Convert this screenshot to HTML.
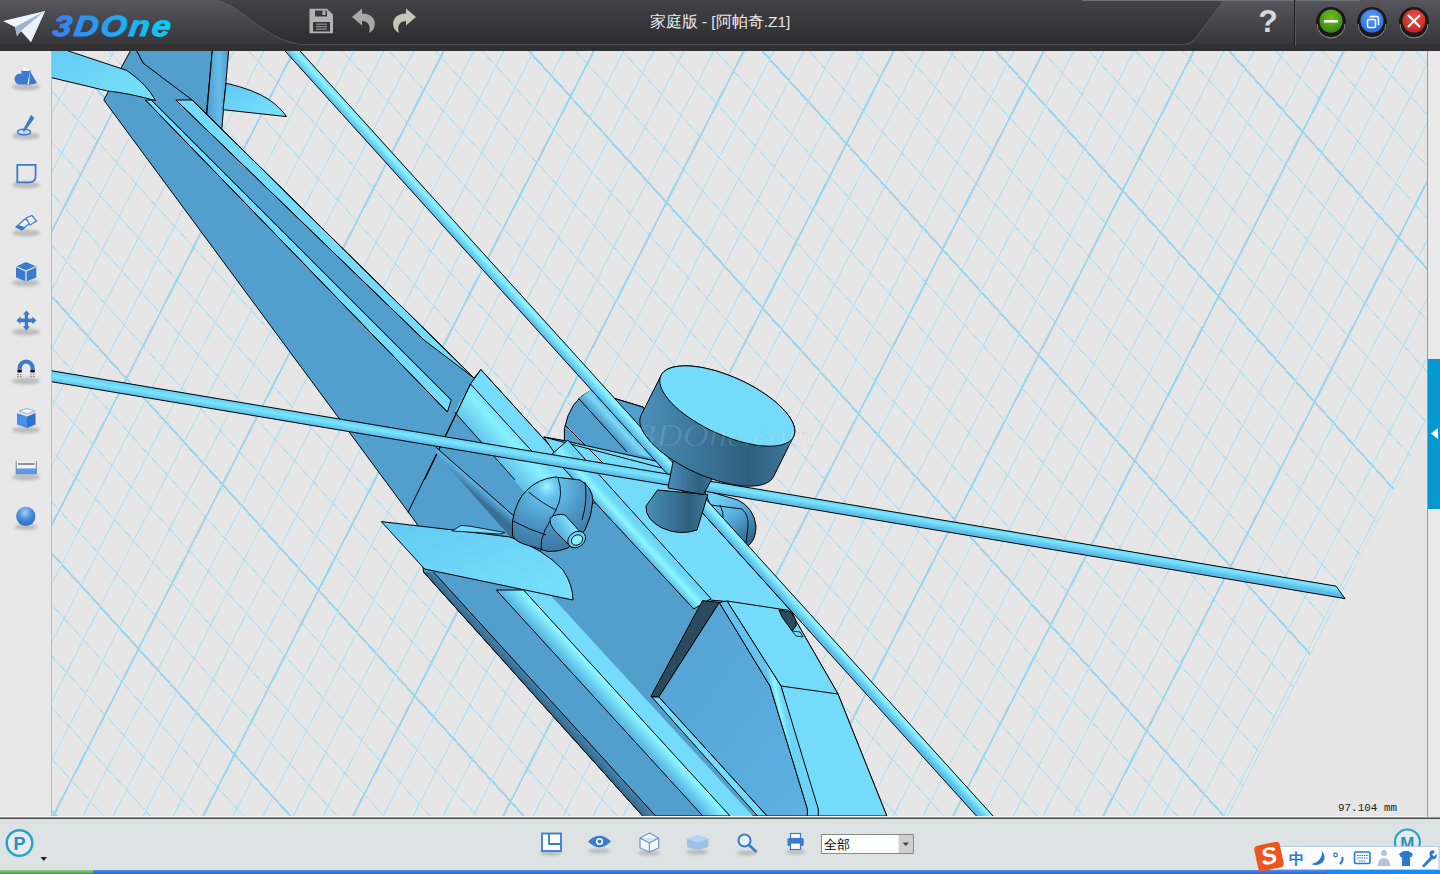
<!DOCTYPE html>
<html><head><meta charset="utf-8">
<style>
html,body{margin:0;padding:0;width:1440px;height:874px;overflow:hidden;background:#e8e8e8;font-family:"Liberation Sans",sans-serif;}
#title{position:absolute;left:0;top:0;width:1440px;height:51px;background:linear-gradient(#3c3b40,#2a2a2c);}
#ttl{position:absolute;left:0;width:1440px;top:10px;text-align:center;color:#e6e6e6;font-size:17px;}
#left{position:absolute;left:0;top:51px;width:51px;height:767px;background:#e8e8e8;}
#vp{position:absolute;left:0;top:0;}
#bottom{position:absolute;left:0;top:818px;width:1440px;height:52px;background:#dde2e2;border-top:1px solid #4a4a4a;}
#task{position:absolute;left:0;top:870px;width:1440px;height:4px;background:#2f6fd8;}
#task .g{position:absolute;left:0;top:0;width:93px;height:4px;background:#5aaa5a;}
#rstrip{position:absolute;left:1428px;top:51px;width:12px;height:767px;background:#eaeaea;border-left:1px solid #a8a8a8;}
#rtab{position:absolute;left:1428px;top:359px;width:12px;height:150px;background:#0898d0;}
#dist{position:absolute;left:1338px;top:799px;font-family:"Liberation Serif",serif;font-size:12px;color:#222;}
#dd{position:absolute;left:821px;top:834px;width:91px;height:19px;background:#fff;border:1px solid #888;font-size:12px;}
</style></head><body>
<svg id="vp" width="1440" height="874" viewBox="0 0 1440 874">
<defs>
<linearGradient id="gStab" x1="0" y1="0" x2="1" y2="1"><stop offset="0" stop-color="#62c8f2"/><stop offset="1" stop-color="#78e2fc"/></linearGradient>
<linearGradient id="gFin" x1="0" y1="0" x2="1" y2="0"><stop offset="0" stop-color="#4f98c8"/><stop offset="0.6" stop-color="#66bcea"/><stop offset="1" stop-color="#4f98c8"/></linearGradient>
<linearGradient id="gRail" x1="0" y1="0" x2="1" y2="0"><stop offset="0" stop-color="#5cc0ea"/><stop offset="0.5" stop-color="#80ecfc"/><stop offset="1" stop-color="#5cc0ea"/></linearGradient>
<linearGradient id="gBlade" x1="0" y1="0" x2="1" y2="0"><stop offset="0" stop-color="#5cc4ee"/><stop offset="0.5" stop-color="#86eefe"/><stop offset="1" stop-color="#60c8f0"/></linearGradient>
<linearGradient id="gBladeH" x1="0" y1="0" x2="0" y2="1"><stop offset="0" stop-color="#78e0fa"/><stop offset="1" stop-color="#6ad4f6"/></linearGradient>
<linearGradient id="gFront" x1="0" y1="0" x2="1" y2="1"><stop offset="0" stop-color="#56a2d4"/><stop offset="1" stop-color="#5cb0e2"/></linearGradient>
<linearGradient id="gNac" x1="0" y1="0" x2="1" y2="0"><stop offset="0" stop-color="#5cb8e6"/><stop offset="0.5" stop-color="#84ecfc"/><stop offset="1" stop-color="#5cb8e6"/></linearGradient>
<linearGradient id="gCyl" x1="0" y1="0" x2="1" y2="0"><stop offset="0" stop-color="#4a90ba"/><stop offset="0.7" stop-color="#2f5f7e"/><stop offset="1" stop-color="#40789c"/></linearGradient>
<linearGradient id="gRailU" x1="0" y1="0" x2="1" y2="-0.8"><stop offset="0" stop-color="#5cc0ea"/><stop offset="0.5" stop-color="#84eefc"/><stop offset="1" stop-color="#62c8f0"/></linearGradient>
<linearGradient id="gLedge" x1="0" y1="0" x2="1" y2="-0.8"><stop offset="0" stop-color="#70d8f8"/><stop offset="1" stop-color="#56a0d0"/></linearGradient>
<linearGradient id="gShade" x1="0" y1="0" x2="1" y2="-0.8"><stop offset="0" stop-color="#3a7098"/><stop offset="1" stop-color="#5aa8d8"/></linearGradient>
<linearGradient id="gNacU" gradientUnits="userSpaceOnUse" x1="454" y1="418" x2="490" y2="385"><stop offset="0" stop-color="#5cbce8"/><stop offset="0.55" stop-color="#88f0fe"/><stop offset="1" stop-color="#62c8f0"/></linearGradient>
<radialGradient id="gCap" gradientUnits="userSpaceOnUse" cx="547" cy="487" r="60"><stop offset="0" stop-color="#9af4fe"/><stop offset="0.18" stop-color="#66c4ee"/><stop offset="0.6" stop-color="#4d98c8"/><stop offset="1" stop-color="#3e7aa6"/></radialGradient>
<linearGradient id="gPipe" x1="0" y1="0" x2="1" y2="-0.6"><stop offset="0" stop-color="#5ab4e4"/><stop offset="0.5" stop-color="#90f2fe"/><stop offset="1" stop-color="#5ab4e4"/></linearGradient>
<linearGradient id="gBevel" gradientUnits="userSpaceOnUse" x1="530" y1="690" x2="540" y2="681"><stop offset="0" stop-color="#36698c"/><stop offset="1" stop-color="#4f94c2"/></linearGradient>
<linearGradient id="gRail1" gradientUnits="userSpaceOnUse" x1="600" y1="700" x2="619.7" y2="682"><stop offset="0" stop-color="#5ab8e6"/><stop offset="0.6" stop-color="#8cf8fe"/><stop offset="1" stop-color="#70dcf8"/></linearGradient>
<linearGradient id="gRail2" gradientUnits="userSpaceOnUse" x1="594.3" y1="501.7" x2="606" y2="491"><stop offset="0" stop-color="#5ab8e6"/><stop offset="0.55" stop-color="#8cf6fe"/><stop offset="1" stop-color="#6cd6f6"/></linearGradient>
<linearGradient id="gEdge" gradientUnits="userSpaceOnUse" x1="770" y1="690" x2="781" y2="688"><stop offset="0" stop-color="#62c4ee"/><stop offset="0.5" stop-color="#90f6fe"/><stop offset="1" stop-color="#6cd4f6"/></linearGradient>
<linearGradient id="gBladeD" gradientUnits="userSpaceOnUse" x1="285" y1="51" x2="296" y2="41"><stop offset="0" stop-color="#58bcea"/><stop offset="0.5" stop-color="#8ef4fe"/><stop offset="1" stop-color="#64ccf2"/></linearGradient>
<linearGradient id="gPodBand" gradientUnits="userSpaceOnUse" x1="598" y1="420" x2="612" y2="407"><stop offset="0" stop-color="#4c96c8"/><stop offset="0.55" stop-color="#7ad8f6"/><stop offset="1" stop-color="#58b4e4"/></linearGradient>
<linearGradient id="gBladeH2" gradientUnits="userSpaceOnUse" x1="52" y1="370.8" x2="50.2" y2="381.7"><stop offset="0" stop-color="#60c6f2"/><stop offset="0.5" stop-color="#7ae6fc"/><stop offset="1" stop-color="#5abbe9"/></linearGradient>
<linearGradient id="gPodR" gradientUnits="userSpaceOnUse" x1="712" y1="498" x2="752" y2="540"><stop offset="0" stop-color="#74d4f8"/><stop offset="0.45" stop-color="#5ab0e0"/><stop offset="1" stop-color="#2e6588"/></linearGradient>
<linearGradient id="gShade2" gradientUnits="userSpaceOnUse" x1="478" y1="498" x2="488" y2="486"><stop offset="0" stop-color="#386f96"/><stop offset="0.5" stop-color="#58a8d8"/><stop offset="1" stop-color="#6cc8f0"/></linearGradient>
<clipPath id="vpclip"><rect x="52" y="51" width="1375" height="765"/></clipPath>
<clipPath id="gridclip"><polygon points="52,51 1427,51 1427,424.6 1228.5,816 52,816"/></clipPath>
</defs>
<rect x="51" y="51" width="1377" height="767" fill="#e6e6e6"/>
<line x1="51.5" y1="51" x2="51.5" y2="818" stroke="#9cc4d8" stroke-width="1"/>
<g clip-path="url(#gridclip)" shape-rendering="crispEdges">
<line x1="-1571.7" y1="51" x2="-876.6" y2="816" stroke="#9dd6ee" stroke-width="2"/>
<line x1="-1525.0" y1="51" x2="-829.9" y2="816" stroke="#b2e0f2" stroke-width="1"/>
<line x1="-1478.3" y1="51" x2="-783.3" y2="816" stroke="#b2e0f2" stroke-width="1"/>
<line x1="-1431.7" y1="51" x2="-736.6" y2="816" stroke="#b2e0f2" stroke-width="1"/>
<line x1="-1385.0" y1="51" x2="-689.9" y2="816" stroke="#b2e0f2" stroke-width="1"/>
<line x1="-1338.3" y1="51" x2="-643.2" y2="816" stroke="#9dd6ee" stroke-width="2"/>
<line x1="-1291.6" y1="51" x2="-596.5" y2="816" stroke="#b2e0f2" stroke-width="1"/>
<line x1="-1244.9" y1="51" x2="-549.9" y2="816" stroke="#b2e0f2" stroke-width="1"/>
<line x1="-1198.3" y1="51" x2="-503.2" y2="816" stroke="#b2e0f2" stroke-width="1"/>
<line x1="-1151.6" y1="51" x2="-456.5" y2="816" stroke="#b2e0f2" stroke-width="1"/>
<line x1="-1104.9" y1="51" x2="-409.8" y2="816" stroke="#9dd6ee" stroke-width="2"/>
<line x1="-1058.2" y1="51" x2="-363.1" y2="816" stroke="#b2e0f2" stroke-width="1"/>
<line x1="-1011.5" y1="51" x2="-316.5" y2="816" stroke="#b2e0f2" stroke-width="1"/>
<line x1="-964.9" y1="51" x2="-269.8" y2="816" stroke="#b2e0f2" stroke-width="1"/>
<line x1="-918.2" y1="51" x2="-223.1" y2="816" stroke="#b2e0f2" stroke-width="1"/>
<line x1="-871.5" y1="51" x2="-176.4" y2="816" stroke="#9dd6ee" stroke-width="2"/>
<line x1="-824.8" y1="51" x2="-129.7" y2="816" stroke="#b2e0f2" stroke-width="1"/>
<line x1="-778.1" y1="51" x2="-83.1" y2="816" stroke="#b2e0f2" stroke-width="1"/>
<line x1="-731.5" y1="51" x2="-36.4" y2="816" stroke="#b2e0f2" stroke-width="1"/>
<line x1="-684.8" y1="51" x2="10.3" y2="816" stroke="#b2e0f2" stroke-width="1"/>
<line x1="-638.1" y1="51" x2="57.0" y2="816" stroke="#9dd6ee" stroke-width="2"/>
<line x1="-591.4" y1="51" x2="103.7" y2="816" stroke="#b2e0f2" stroke-width="1"/>
<line x1="-544.7" y1="51" x2="150.3" y2="816" stroke="#b2e0f2" stroke-width="1"/>
<line x1="-498.1" y1="51" x2="197.0" y2="816" stroke="#b2e0f2" stroke-width="1"/>
<line x1="-451.4" y1="51" x2="243.7" y2="816" stroke="#b2e0f2" stroke-width="1"/>
<line x1="-404.7" y1="51" x2="290.4" y2="816" stroke="#9dd6ee" stroke-width="2"/>
<line x1="-358.0" y1="51" x2="337.1" y2="816" stroke="#b2e0f2" stroke-width="1"/>
<line x1="-311.3" y1="51" x2="383.7" y2="816" stroke="#b2e0f2" stroke-width="1"/>
<line x1="-264.7" y1="51" x2="430.4" y2="816" stroke="#b2e0f2" stroke-width="1"/>
<line x1="-218.0" y1="51" x2="477.1" y2="816" stroke="#b2e0f2" stroke-width="1"/>
<line x1="-171.3" y1="51" x2="523.8" y2="816" stroke="#9dd6ee" stroke-width="2"/>
<line x1="-124.6" y1="51" x2="570.5" y2="816" stroke="#b2e0f2" stroke-width="1"/>
<line x1="-77.9" y1="51" x2="617.1" y2="816" stroke="#b2e0f2" stroke-width="1"/>
<line x1="-31.3" y1="51" x2="663.8" y2="816" stroke="#b2e0f2" stroke-width="1"/>
<line x1="15.4" y1="51" x2="710.5" y2="816" stroke="#b2e0f2" stroke-width="1"/>
<line x1="62.1" y1="51" x2="757.2" y2="816" stroke="#9dd6ee" stroke-width="2"/>
<line x1="108.8" y1="51" x2="803.9" y2="816" stroke="#b2e0f2" stroke-width="1"/>
<line x1="155.5" y1="51" x2="850.5" y2="816" stroke="#b2e0f2" stroke-width="1"/>
<line x1="202.1" y1="51" x2="897.2" y2="816" stroke="#b2e0f2" stroke-width="1"/>
<line x1="248.8" y1="51" x2="943.9" y2="816" stroke="#b2e0f2" stroke-width="1"/>
<line x1="295.5" y1="51" x2="990.6" y2="816" stroke="#9dd6ee" stroke-width="2"/>
<line x1="342.2" y1="51" x2="1037.3" y2="816" stroke="#b2e0f2" stroke-width="1"/>
<line x1="388.9" y1="51" x2="1083.9" y2="816" stroke="#b2e0f2" stroke-width="1"/>
<line x1="435.5" y1="51" x2="1130.6" y2="816" stroke="#b2e0f2" stroke-width="1"/>
<line x1="482.2" y1="51" x2="1177.3" y2="816" stroke="#b2e0f2" stroke-width="1"/>
<line x1="528.9" y1="51" x2="1224.0" y2="816" stroke="#9dd6ee" stroke-width="2"/>
<line x1="575.6" y1="51" x2="1270.7" y2="816" stroke="#b2e0f2" stroke-width="1"/>
<line x1="622.3" y1="51" x2="1317.3" y2="816" stroke="#b2e0f2" stroke-width="1"/>
<line x1="668.9" y1="51" x2="1364.0" y2="816" stroke="#b2e0f2" stroke-width="1"/>
<line x1="715.6" y1="51" x2="1410.7" y2="816" stroke="#b2e0f2" stroke-width="1"/>
<line x1="762.3" y1="51" x2="1457.4" y2="816" stroke="#9dd6ee" stroke-width="2"/>
<line x1="809.0" y1="51" x2="1504.1" y2="816" stroke="#b2e0f2" stroke-width="1"/>
<line x1="855.7" y1="51" x2="1550.7" y2="816" stroke="#b2e0f2" stroke-width="1"/>
<line x1="902.3" y1="51" x2="1597.4" y2="816" stroke="#b2e0f2" stroke-width="1"/>
<line x1="949.0" y1="51" x2="1644.1" y2="816" stroke="#b2e0f2" stroke-width="1"/>
<line x1="995.7" y1="51" x2="1690.8" y2="816" stroke="#9dd6ee" stroke-width="2"/>
<line x1="1042.4" y1="51" x2="1737.5" y2="816" stroke="#b2e0f2" stroke-width="1"/>
<line x1="1089.1" y1="51" x2="1784.1" y2="816" stroke="#b2e0f2" stroke-width="1"/>
<line x1="1135.7" y1="51" x2="1830.8" y2="816" stroke="#b2e0f2" stroke-width="1"/>
<line x1="1182.4" y1="51" x2="1877.5" y2="816" stroke="#b2e0f2" stroke-width="1"/>
<line x1="1229.1" y1="51" x2="1924.2" y2="816" stroke="#9dd6ee" stroke-width="2"/>
<line x1="1275.8" y1="51" x2="1970.9" y2="816" stroke="#b2e0f2" stroke-width="1"/>
<line x1="1322.5" y1="51" x2="2017.5" y2="816" stroke="#b2e0f2" stroke-width="1"/>
<line x1="1369.1" y1="51" x2="2064.2" y2="816" stroke="#b2e0f2" stroke-width="1"/>
<line x1="1415.8" y1="51" x2="2110.9" y2="816" stroke="#b2e0f2" stroke-width="1"/>
<line x1="1462.5" y1="51" x2="2157.6" y2="816" stroke="#9dd6ee" stroke-width="2"/>
<line x1="1509.2" y1="51" x2="2204.3" y2="816" stroke="#b2e0f2" stroke-width="1"/>
<line x1="1555.9" y1="51" x2="2250.9" y2="816" stroke="#b2e0f2" stroke-width="1"/>
<line x1="1602.5" y1="51" x2="2297.6" y2="816" stroke="#b2e0f2" stroke-width="1"/>
<line x1="1649.2" y1="51" x2="2344.3" y2="816" stroke="#b2e0f2" stroke-width="1"/>
<line x1="-456.2" y1="51" x2="-846.8" y2="816" stroke="#9dd6ee" stroke-width="2"/>
<line x1="-426.2" y1="51" x2="-816.8" y2="816" stroke="#b2e0f2" stroke-width="1"/>
<line x1="-396.2" y1="51" x2="-786.8" y2="816" stroke="#b2e0f2" stroke-width="1"/>
<line x1="-366.2" y1="51" x2="-756.8" y2="816" stroke="#b2e0f2" stroke-width="1"/>
<line x1="-336.2" y1="51" x2="-726.8" y2="816" stroke="#b2e0f2" stroke-width="1"/>
<line x1="-306.2" y1="51" x2="-696.8" y2="816" stroke="#9dd6ee" stroke-width="2"/>
<line x1="-276.2" y1="51" x2="-666.8" y2="816" stroke="#b2e0f2" stroke-width="1"/>
<line x1="-246.2" y1="51" x2="-636.8" y2="816" stroke="#b2e0f2" stroke-width="1"/>
<line x1="-216.2" y1="51" x2="-606.8" y2="816" stroke="#b2e0f2" stroke-width="1"/>
<line x1="-186.2" y1="51" x2="-576.8" y2="816" stroke="#b2e0f2" stroke-width="1"/>
<line x1="-156.2" y1="51" x2="-546.8" y2="816" stroke="#9dd6ee" stroke-width="2"/>
<line x1="-126.2" y1="51" x2="-516.8" y2="816" stroke="#b2e0f2" stroke-width="1"/>
<line x1="-96.2" y1="51" x2="-486.8" y2="816" stroke="#b2e0f2" stroke-width="1"/>
<line x1="-66.2" y1="51" x2="-456.8" y2="816" stroke="#b2e0f2" stroke-width="1"/>
<line x1="-36.2" y1="51" x2="-426.8" y2="816" stroke="#b2e0f2" stroke-width="1"/>
<line x1="-6.2" y1="51" x2="-396.8" y2="816" stroke="#9dd6ee" stroke-width="2"/>
<line x1="23.8" y1="51" x2="-366.8" y2="816" stroke="#b2e0f2" stroke-width="1"/>
<line x1="53.8" y1="51" x2="-336.8" y2="816" stroke="#b2e0f2" stroke-width="1"/>
<line x1="83.8" y1="51" x2="-306.8" y2="816" stroke="#b2e0f2" stroke-width="1"/>
<line x1="113.8" y1="51" x2="-276.8" y2="816" stroke="#b2e0f2" stroke-width="1"/>
<line x1="143.8" y1="51" x2="-246.8" y2="816" stroke="#9dd6ee" stroke-width="2"/>
<line x1="173.8" y1="51" x2="-216.8" y2="816" stroke="#b2e0f2" stroke-width="1"/>
<line x1="203.8" y1="51" x2="-186.8" y2="816" stroke="#b2e0f2" stroke-width="1"/>
<line x1="233.8" y1="51" x2="-156.8" y2="816" stroke="#b2e0f2" stroke-width="1"/>
<line x1="263.8" y1="51" x2="-126.8" y2="816" stroke="#b2e0f2" stroke-width="1"/>
<line x1="293.8" y1="51" x2="-96.8" y2="816" stroke="#9dd6ee" stroke-width="2"/>
<line x1="323.8" y1="51" x2="-66.8" y2="816" stroke="#b2e0f2" stroke-width="1"/>
<line x1="353.8" y1="51" x2="-36.8" y2="816" stroke="#b2e0f2" stroke-width="1"/>
<line x1="383.8" y1="51" x2="-6.8" y2="816" stroke="#b2e0f2" stroke-width="1"/>
<line x1="413.8" y1="51" x2="23.2" y2="816" stroke="#b2e0f2" stroke-width="1"/>
<line x1="443.8" y1="51" x2="53.2" y2="816" stroke="#9dd6ee" stroke-width="2"/>
<line x1="473.8" y1="51" x2="83.2" y2="816" stroke="#b2e0f2" stroke-width="1"/>
<line x1="503.8" y1="51" x2="113.2" y2="816" stroke="#b2e0f2" stroke-width="1"/>
<line x1="533.8" y1="51" x2="143.2" y2="816" stroke="#b2e0f2" stroke-width="1"/>
<line x1="563.8" y1="51" x2="173.2" y2="816" stroke="#b2e0f2" stroke-width="1"/>
<line x1="593.8" y1="51" x2="203.2" y2="816" stroke="#9dd6ee" stroke-width="2"/>
<line x1="623.8" y1="51" x2="233.2" y2="816" stroke="#b2e0f2" stroke-width="1"/>
<line x1="653.8" y1="51" x2="263.2" y2="816" stroke="#b2e0f2" stroke-width="1"/>
<line x1="683.8" y1="51" x2="293.2" y2="816" stroke="#b2e0f2" stroke-width="1"/>
<line x1="713.8" y1="51" x2="323.2" y2="816" stroke="#b2e0f2" stroke-width="1"/>
<line x1="743.8" y1="51" x2="353.2" y2="816" stroke="#9dd6ee" stroke-width="2"/>
<line x1="773.8" y1="51" x2="383.2" y2="816" stroke="#b2e0f2" stroke-width="1"/>
<line x1="803.8" y1="51" x2="413.2" y2="816" stroke="#b2e0f2" stroke-width="1"/>
<line x1="833.8" y1="51" x2="443.2" y2="816" stroke="#b2e0f2" stroke-width="1"/>
<line x1="863.8" y1="51" x2="473.2" y2="816" stroke="#b2e0f2" stroke-width="1"/>
<line x1="893.8" y1="51" x2="503.2" y2="816" stroke="#9dd6ee" stroke-width="2"/>
<line x1="923.8" y1="51" x2="533.2" y2="816" stroke="#b2e0f2" stroke-width="1"/>
<line x1="953.8" y1="51" x2="563.2" y2="816" stroke="#b2e0f2" stroke-width="1"/>
<line x1="983.8" y1="51" x2="593.2" y2="816" stroke="#b2e0f2" stroke-width="1"/>
<line x1="1013.8" y1="51" x2="623.2" y2="816" stroke="#b2e0f2" stroke-width="1"/>
<line x1="1043.8" y1="51" x2="653.2" y2="816" stroke="#9dd6ee" stroke-width="2"/>
<line x1="1073.8" y1="51" x2="683.2" y2="816" stroke="#b2e0f2" stroke-width="1"/>
<line x1="1103.8" y1="51" x2="713.2" y2="816" stroke="#b2e0f2" stroke-width="1"/>
<line x1="1133.8" y1="51" x2="743.2" y2="816" stroke="#b2e0f2" stroke-width="1"/>
<line x1="1163.8" y1="51" x2="773.2" y2="816" stroke="#b2e0f2" stroke-width="1"/>
<line x1="1193.8" y1="51" x2="803.2" y2="816" stroke="#9dd6ee" stroke-width="2"/>
<line x1="1223.8" y1="51" x2="833.2" y2="816" stroke="#b2e0f2" stroke-width="1"/>
<line x1="1253.8" y1="51" x2="863.2" y2="816" stroke="#b2e0f2" stroke-width="1"/>
<line x1="1283.8" y1="51" x2="893.2" y2="816" stroke="#b2e0f2" stroke-width="1"/>
<line x1="1313.8" y1="51" x2="923.2" y2="816" stroke="#b2e0f2" stroke-width="1"/>
<line x1="1343.8" y1="51" x2="953.2" y2="816" stroke="#9dd6ee" stroke-width="2"/>
<line x1="1373.8" y1="51" x2="983.2" y2="816" stroke="#b2e0f2" stroke-width="1"/>
<line x1="1403.8" y1="51" x2="1013.2" y2="816" stroke="#b2e0f2" stroke-width="1"/>
<line x1="1433.8" y1="51" x2="1043.2" y2="816" stroke="#b2e0f2" stroke-width="1"/>
<line x1="1463.8" y1="51" x2="1073.2" y2="816" stroke="#b2e0f2" stroke-width="1"/>
<line x1="1493.8" y1="51" x2="1103.2" y2="816" stroke="#9dd6ee" stroke-width="2"/>
<line x1="1523.8" y1="51" x2="1133.2" y2="816" stroke="#b2e0f2" stroke-width="1"/>
<line x1="1553.8" y1="51" x2="1163.2" y2="816" stroke="#b2e0f2" stroke-width="1"/>
<line x1="1583.8" y1="51" x2="1193.2" y2="816" stroke="#b2e0f2" stroke-width="1"/>
<line x1="1613.8" y1="51" x2="1223.2" y2="816" stroke="#b2e0f2" stroke-width="1"/>
<line x1="1643.8" y1="51" x2="1253.2" y2="816" stroke="#9dd6ee" stroke-width="2"/>
<line x1="1673.8" y1="51" x2="1283.2" y2="816" stroke="#b2e0f2" stroke-width="1"/>
<line x1="1703.8" y1="51" x2="1313.2" y2="816" stroke="#b2e0f2" stroke-width="1"/>
<line x1="1733.8" y1="51" x2="1343.2" y2="816" stroke="#b2e0f2" stroke-width="1"/>
<line x1="1763.8" y1="51" x2="1373.2" y2="816" stroke="#b2e0f2" stroke-width="1"/>
<line x1="1793.8" y1="51" x2="1403.2" y2="816" stroke="#9dd6ee" stroke-width="2"/>
<line x1="1823.8" y1="51" x2="1433.2" y2="816" stroke="#b2e0f2" stroke-width="1"/>
<line x1="1853.8" y1="51" x2="1463.2" y2="816" stroke="#b2e0f2" stroke-width="1"/>
<line x1="1883.8" y1="51" x2="1493.2" y2="816" stroke="#b2e0f2" stroke-width="1"/>
<line x1="1913.8" y1="51" x2="1523.2" y2="816" stroke="#b2e0f2" stroke-width="1"/>
<line x1="1943.8" y1="51" x2="1553.2" y2="816" stroke="#9dd6ee" stroke-width="2"/>
<line x1="1973.8" y1="51" x2="1583.2" y2="816" stroke="#b2e0f2" stroke-width="1"/>
<line x1="2003.8" y1="51" x2="1613.2" y2="816" stroke="#b2e0f2" stroke-width="1"/>
<line x1="2033.8" y1="51" x2="1643.2" y2="816" stroke="#b2e0f2" stroke-width="1"/>
<line x1="2063.8" y1="51" x2="1673.2" y2="816" stroke="#b2e0f2" stroke-width="1"/>
<line x1="2093.8" y1="51" x2="1703.2" y2="816" stroke="#9dd6ee" stroke-width="2"/>
<line x1="2123.8" y1="51" x2="1733.2" y2="816" stroke="#b2e0f2" stroke-width="1"/>
<line x1="2153.8" y1="51" x2="1763.2" y2="816" stroke="#b2e0f2" stroke-width="1"/>
<line x1="2183.8" y1="51" x2="1793.2" y2="816" stroke="#b2e0f2" stroke-width="1"/>
<line x1="2213.8" y1="51" x2="1823.2" y2="816" stroke="#b2e0f2" stroke-width="1"/>
<line x1="1618.2" y1="51" x2="1227.7" y2="816" stroke="#b2e0f2" stroke-width="1"/>
</g>
<g clip-path="url(#vpclip)">
<polygon points="133.5,45.0 212.8,45.0 205.4,123.5 143.1,63.1" fill="#529ecd" stroke="#000" stroke-width="1" stroke-linejoin="round" />
<polygon points="212.8,45.0 229.2,45.0 221.7,129.8 205.4,129.8" fill="url(#gFin)" stroke="#000" stroke-width="1" stroke-linejoin="round" />
<path d="M226.2,83.2 Q255,90 268.9,99.6 Q280,107 286.5,116.6 L223,109.7 Z" fill="url(#gStab)" stroke="#000" stroke-width="1" />
<polygon points="103.8,100.0 417.1,524.0 423.6,572.0 642.7,816.0 886.8,816.0 838.0,694.0 796.0,621.0 792.0,612.0 672.8,480.0 643.0,407.0 590.0,391.0 564.0,440.0 558.6,455.3 480.9,369.6 474.0,378.0 192.1,100.0 143.1,63.1 133.5,45.0" fill="#529ecd" stroke="#000" stroke-width="1" stroke-linejoin="round" />
<polygon points="145.4,100.0 151.2,100.0 451.2,400.0 447.4,412.0" fill="#74dcfa" stroke="#000" stroke-width="1" stroke-linejoin="round" />
<polygon points="175.9,100.0 192.1,100.0 474.0,378.0 424.0,340.0" fill="#74dcfa" stroke="#000" stroke-width="1" stroke-linejoin="round" />
<line x1="145.4" y1="100.0" x2="447.4" y2="412.0" stroke="#000" stroke-width="1"/>
<line x1="151.2" y1="100.0" x2="451.2" y2="400.0" stroke="#000" stroke-width="1"/>
<line x1="175.9" y1="100.0" x2="424.0" y2="340.0" stroke="#000" stroke-width="1"/>
<line x1="192.1" y1="100.0" x2="474.0" y2="378.0" stroke="#000" stroke-width="1"/>
<path d="M40,45 L52,45 L69,51.2 L126.7,70.4 Q147,84 155.5,100.6 Q128,93 107.5,91 L51.7,77.7 L40,75 Z" fill="url(#gStab)" stroke="#000" stroke-width="1" />
<polygon points="480.9,369.6 558.6,455.3 600.0,500.0 560.0,520.0 528.0,496.0 470.5,384.0" fill="#74dcfa" stroke="#000" stroke-width="1" stroke-linejoin="round" />
<polygon points="470.5,384.0 556.0,478.0 528.0,496.0 454.5,412.0" fill="url(#gNacU)" stroke="none" stroke-width="1" stroke-linejoin="round" />
<line x1="470.5" y1="384.0" x2="540.0" y2="460.0" stroke="#000" stroke-width="1"/>
<line x1="454.5" y1="412.0" x2="515.0" y2="480.0" stroke="#000" stroke-width="1"/>
<line x1="470.5" y1="384.0" x2="424.6" y2="480.0" stroke="#000" stroke-width="1"/>
<line x1="470.5" y1="384.0" x2="408.0" y2="512.4" stroke="#000" stroke-width="1"/>
<polygon points="436.0,447.3 515.0,517.0 513.0,540.0 436.0,453.0" fill="url(#gShade2)" stroke="none" stroke-width="1" stroke-linejoin="round" />
<line x1="436.0" y1="447.3" x2="515.0" y2="517.0" stroke="#000" stroke-width="1"/>
<polygon points="423.6,572.0 433.5,572.0 655.6,816.0 642.7,816.0" fill="url(#gBevel)" stroke="none" stroke-width="1" stroke-linejoin="round" />
<line x1="423.6" y1="572.0" x2="642.7" y2="816.0" stroke="#000" stroke-width="1"/>
<line x1="433.5" y1="572.0" x2="655.6" y2="816.0" stroke="#000" stroke-width="1"/>
<polygon points="523.5,590.0 545.8,590.0 753.0,816.0 730.0,816.0" fill="#74dcfa" stroke="none" stroke-width="1" stroke-linejoin="round" />
<polygon points="496.3,590.0 523.5,590.0 730.0,816.0 702.9,816.0" fill="url(#gRail1)" stroke="#000" stroke-width="1" stroke-linejoin="round" />
<polygon points="543.8,437.0 564.0,440.7 660.0,463.0 676.0,480.0 672.8,480.0 792.0,612.0 724.7,601.3 711.0,600.1 600.0,480.0 556.0,455.0" fill="#74dcfa" stroke="#000" stroke-width="1" stroke-linejoin="round" />
<path d="M564.4,441 L564.4,428.6 Q570,400 590,391 L643.3,407.2 L662,466 Z" fill="#529ecd" stroke="#000" stroke-width="1" />
<polygon points="578.7,398.5 591.0,389.8 591.4,390.0 652.9,458.0 627.1,452.1" fill="url(#gPodBand)" stroke="none" stroke-width="1" stroke-linejoin="round" />
<line x1="578.7" y1="398.5" x2="627.1" y2="452.1" stroke="#000" stroke-width="1"/>
<line x1="565.0" y1="425.0" x2="610.0" y2="470.0" stroke="#000" stroke-width="1"/>
<path d="M704,490 L738,500 Q754,508 756,526 Q756,540 748,546 L720,528 Z" fill="url(#gPodR)" stroke="#000" stroke-width="1" />
<path d="M711,505 L742,509 Q749,515 748,527 L746,543 M720,505 Q724,512 723,520" fill="none" stroke="#000" stroke-width="0.9" />
<polygon points="640.0,425.0 668.0,440.0 700.0,470.0 690.0,485.0 660.0,463.0" fill="#74dcfa" stroke="none" stroke-width="1" stroke-linejoin="round" />
<polygon points="543.8,437.0 564.0,440.7 660.0,462.0 662.0,468.0" fill="#74dcfa" stroke="#000" stroke-width="1" stroke-linejoin="round" />
<polygon points="551.0,455.0 567.8,440.0 711.0,598.7 693.8,609.0" fill="url(#gRail2)" stroke="#000" stroke-width="1" stroke-linejoin="round" />
<polygon points="702.5,600.6 719.3,602.5 658.8,697.0 651.0,696.3" fill="#2c4a5e" stroke="#000" stroke-width="1" stroke-linejoin="round" />
<polygon points="719.3,602.5 770.0,686.0 807.4,809.0 807.4,816.0 767.0,816.0 658.8,697.0" fill="url(#gFront)" stroke="#000" stroke-width="1" stroke-linejoin="round" />
<polygon points="651.8,697.0 658.8,697.0 767.0,816.0 757.6,816.0" fill="#74dcfa" stroke="#000" stroke-width="1" stroke-linejoin="round" />
<polygon points="727.0,601.0 788.8,610.4 796.0,621.0 838.0,694.0 886.8,816.0 818.3,816.0 781.0,686.0" fill="#74dcfa" stroke="#000" stroke-width="1" stroke-linejoin="round" />
<polygon points="719.3,602.5 727.0,601.0 781.0,686.0 818.3,809.0 818.3,816.0 807.4,816.0 807.4,809.0 770.0,686.0" fill="url(#gEdge)" stroke="#000" stroke-width="1" stroke-linejoin="round" />
<line x1="781.0" y1="686.0" x2="838.0" y2="694.0" stroke="#000" stroke-width="1"/>
<path d="M779,610 L790,612 Q797,618 796,626 L792,631 L782,617 Z" fill="#2c4a5e" stroke="#000" stroke-width="1" />
<polygon points="792.0,631.0 800.0,632.0 803.0,637.0 796.0,636.0" fill="#74dcfa" stroke="#000" stroke-width="0.8" stroke-linejoin="round" />
<path d="M381.3,521.6 L452.4,529.9 L510,537 Q545,550 563,570 Q573,585 573,600 L424.6,569 Z" fill="url(#gStab)" stroke="#000" stroke-width="1" />
<polygon points="452.0,531.0 461.0,525.5 470.0,526.2 505.0,532.5 500.0,534.0" fill="#74dcfa" stroke="#000" stroke-width="0.8" stroke-linejoin="round" />
<path d="M512.5,535 L512.5,521 Q516,500 527,490 Q538,479 555,477 L580,480 Q592,487 593,500 Q592,516 585,530 L568,548 Q558,552 548,551.5 L530,546 Q514,542 512.5,535 Z" fill="url(#gCap)" stroke="#000" stroke-width="1" />
<path d="M528.5,492 Q545,505 556,510 M558,478 Q564,495 556,510 L545,530 Q540,540 541,551 M585,482 Q588,500 582,520 M513,521 Q530,530 546,535" fill="none" stroke="#000" stroke-width="0.9" />
<path d="M550,518 Q556,513 565,515 L582,534 Q582,545 572,548 L554,530 Q549,524 550,518 Z" fill="url(#gPipe)" stroke="#000" stroke-width="0.9" />
<ellipse cx="576.7" cy="539.5" rx="9.5" ry="7.5" transform="rotate(-35 576.7 539.5)" fill="#6cd0f4" stroke="#000" stroke-width="0.9"/>
<ellipse cx="577" cy="540" rx="6" ry="4.8" transform="rotate(-35 577 540)" fill="#8af2fe" stroke="#000" stroke-width="0.9"/>
<polygon points="279.6,45.0 294.6,45.0 688.6,480.0 674.6,482.0" fill="url(#gBladeD)" stroke="#000" stroke-width="1" stroke-linejoin="round" />
<polygon points="40.0,368.8 680.0,476.1 680.0,487.1 40.0,379.8" fill="url(#gBladeH2)" stroke="#000" stroke-width="1" stroke-linejoin="round" />
<polygon points="700.0,479.5 1336.0,586.1 1345.0,598.6 700.0,490.5" fill="url(#gBladeH2)" stroke="#000" stroke-width="1" stroke-linejoin="round" />
<polygon points="672.8,480.0 688.6,480.0 1001.2,825.0 984.6,825.0" fill="url(#gBladeD)" stroke="#000" stroke-width="1" stroke-linejoin="round" />
<path d="M657.5,490 L707.9,494.6 L697,530 Q680,536 662,528 Q645,519 646,506 Z" fill="url(#gCyl)" stroke="#000" stroke-width="1" />
<polygon points="673.5,459.0 713.6,476.0 703.3,494.6 668.0,488.0" fill="url(#gCyl)" stroke="#000" stroke-width="1" stroke-linejoin="round" />
<polygon points="639.8,420.8 640.1,418.1 640.9,415.7 660.9,375.7 662.2,373.5 664.0,371.6 666.2,369.9 669.0,368.5 672.2,367.4 675.8,366.6 679.8,366.1 684.1,365.8 688.8,365.9 693.8,366.3 699.1,367.0 704.5,368.0 710.1,369.3 715.9,370.8 721.7,372.7 727.6,374.8 733.5,377.1 739.3,379.6 745.1,382.3 750.7,385.3 756.1,388.3 761.3,391.6 766.3,394.9 770.9,398.3 775.3,401.7 779.2,405.2 782.8,408.7 785.9,412.2 788.6,415.7 790.8,419.0 792.6,422.3 793.8,425.4 794.6,428.4 794.8,431.2 794.5,433.9 793.7,436.3 773.7,476.3 772.4,478.5 770.6,480.4 768.4,482.1 765.6,483.5 762.4,484.6 758.8,485.4 754.8,485.9 750.5,486.2 745.8,486.1 740.8,485.7 735.5,485.0 730.1,484.0 724.5,482.7 718.7,481.2 712.9,479.3 707.0,477.2 701.1,474.9 695.3,472.4 689.5,469.7 683.9,466.7 678.5,463.7 673.3,460.4 668.3,457.1 663.7,453.7 659.3,450.3 655.4,446.8 651.8,443.3 648.7,439.8 646.0,436.3 643.8,433.0 642.0,429.7 640.8,426.6 640.0,423.6" fill="url(#gCyl)" stroke="#000" stroke-width="1" stroke-linejoin="round" />
<polygon points="793.7,436.3 792.4,438.5 790.6,440.4 788.4,442.1 785.6,443.5 782.4,444.6 778.8,445.4 774.8,445.9 770.5,446.2 765.8,446.1 760.8,445.7 755.5,445.0 750.1,444.0 744.5,442.7 738.7,441.2 732.9,439.3 727.0,437.2 721.1,434.9 715.3,432.4 709.5,429.7 703.9,426.7 698.5,423.7 693.3,420.4 688.3,417.1 683.7,413.7 679.3,410.3 675.4,406.8 671.8,403.3 668.7,399.8 666.0,396.3 663.8,393.0 662.0,389.7 660.8,386.6 660.0,383.6 659.8,380.8 660.1,378.1 660.9,375.7 662.2,373.5 664.0,371.6 666.2,369.9 669.0,368.5 672.2,367.4 675.8,366.6 679.8,366.1 684.1,365.8 688.8,365.9 693.8,366.3 699.1,367.0 704.5,368.0 710.1,369.3 715.9,370.8 721.7,372.7 727.6,374.8 733.5,377.1 739.3,379.6 745.1,382.3 750.7,385.3 756.1,388.3 761.3,391.6 766.3,394.9 770.9,398.3 775.3,401.7 779.2,405.2 782.8,408.7 785.9,412.2 788.6,415.7 790.8,419.0 792.6,422.3 793.8,425.4 794.6,428.4 794.8,431.2 794.5,433.9 793.7,436.3" fill="#74dcfa" stroke="#000" stroke-width="1" stroke-linejoin="round" />
<text x="628" y="446" font-family="Liberation Serif" font-style="italic" font-size="31" textLength="185" lengthAdjust="spacingAndGlyphs" fill="#ffffff" fill-opacity="0.13" stroke="#000" stroke-opacity="0.06" stroke-width="1">i3DOne.com</text>
</g>
<defs><filter id="blur2" x="-50%" y="-100%" width="200%" height="300%"><feGaussianBlur stdDeviation="1.6"/></filter><radialGradient id="sph" cx="0.45" cy="0.3" r="0.7"><stop offset="0" stop-color="#a8d0f8"/><stop offset="0.5" stop-color="#4a8ee0"/><stop offset="1" stop-color="#2d6cc0"/></radialGradient></defs>
<rect x="0" y="51" width="51" height="767" fill="#e8e8e8"/>
<ellipse cx="26" cy="87" rx="14" ry="3.5" fill="#9a9a9a" opacity="0.55" filter="url(#blur2)"/>
<circle cx="20" cy="79" r="5.5" fill="#3a7bd0"/>
<rect x="21.5" y="69.5" width="9" height="15" fill="#3a7bd0"/><ellipse cx="26" cy="69.5" rx="4.5" ry="1.6" fill="#f4f4f4"/>
<path d="M30,71 L37,83 Q33,85 27.5,84 Z" fill="#3a7bd0"/><path d="M30,71 L27.5,84 L29,84 Z" fill="#f4f4f4"/>
<ellipse cx="26" cy="136" rx="14" ry="3.5" fill="#9a9a9a" opacity="0.55" filter="url(#blur2)"/>
<ellipse cx="24" cy="132" rx="6.5" ry="2.8" fill="none" stroke="#3a7bd0" stroke-width="1.4"/>
<path d="M31,115 L34.5,118 L25,131 L23,132 L23.5,129 Z" fill="#3a7bd0"/>
<ellipse cx="26" cy="185" rx="14" ry="3.5" fill="#9a9a9a" opacity="0.55" filter="url(#blur2)"/>
<path d="M17.3,164.8 H35.6 V176 Q35.6,182.4 29,182.4 H17.3 Z" fill="none" stroke="#3a7bd0" stroke-width="1.8"/>
<ellipse cx="26" cy="233" rx="14" ry="3.5" fill="#9a9a9a" opacity="0.55" filter="url(#blur2)"/>
<path d="M16,227 L25,219 L31,222 L22,230 Z" fill="#f0f4fa" stroke="#3a7bd0" stroke-width="1.2"/>
<path d="M26,218 L32,215.5 L36.5,221 L30,225 Z" fill="#f0f4fa" stroke="#3a7bd0" stroke-width="1.2"/>
<path d="M16,227 L22,230 L25,227 L18,225 Z" fill="#3a7bd0"/>
<ellipse cx="26" cy="283" rx="14" ry="3.5" fill="#9a9a9a" opacity="0.55" filter="url(#blur2)"/>
<path d="M26,262 L36.3,266.5 V277.5 L26,281.4 L16,277.5 V266.5 Z" fill="#3a7bd0"/>
<path d="M16,266.5 L26,271 L36.3,266.5 M26,271 V281.4" fill="none" stroke="#e8e8e8" stroke-width="1.2"/>
<ellipse cx="26" cy="332" rx="14" ry="3.5" fill="#9a9a9a" opacity="0.55" filter="url(#blur2)"/>
<path d="M26.4,310.4 L30,314.5 H28 V318.5 H32.3 V316.5 L36.4,320.4 L32.3,324.3 V322.3 H28 V326.3 H30 L26.4,330.4 L22.8,326.3 H24.8 V322.3 H20.5 V324.3 L16.4,320.4 L20.5,316.5 V318.5 H24.8 V314.5 H22.8 Z" fill="#3a7bd0"/>
<ellipse cx="26" cy="381" rx="14" ry="3.5" fill="#9a9a9a" opacity="0.55" filter="url(#blur2)"/>
<path d="M17.5,372 V368 A8.6,8.6 0 0 1 34.7,368 V372 H30.5 V368 A4.4,4.4 0 0 0 21.7,368 V372 Z" fill="#3a7bd0"/>
<rect x="17.5" y="370" width="4.2" height="2.5" fill="#111"/><rect x="30.5" y="370" width="4.2" height="2.5" fill="#111"/>
<path d="M18,374 V378 M20.8,374 V378 M31,374 V378 M33.8,374 V378" stroke="#555" stroke-width="1" stroke-dasharray="1.2,0.8"/>
<ellipse cx="26" cy="430" rx="14" ry="3.5" fill="#9a9a9a" opacity="0.55" filter="url(#blur2)"/>
<path d="M17,413 L27,416.5 V428 L17,424.5 Z" fill="#4a90e8"/><path d="M27,416.5 L35.5,413 V424.5 L27,428 Z" fill="#3270c8"/>
<path d="M19,411 L27,408.5 L35,411 L27,414 Z" fill="#f4f8fc" stroke="#7aa6d8" stroke-width="0.8"/>
<ellipse cx="26" cy="477" rx="14" ry="3.5" fill="#9a9a9a" opacity="0.55" filter="url(#blur2)"/>
<rect x="16" y="461.5" width="20.5" height="7" fill="#f2f2f2"/>
<rect x="16" y="468.5" width="20.5" height="5.8" fill="#5a98e8"/>
<path d="M16.2,461 V474 M36.3,461 V474" stroke="#6a8ab0" stroke-width="1"/>
<path d="M18,464 H34.5" stroke="#333" stroke-width="1"/>
<ellipse cx="26" cy="527" rx="12" ry="3" fill="#9a9a9a" opacity="0.55" filter="url(#blur2)"/>
<circle cx="25.8" cy="516.4" r="9.6" fill="url(#sph)"/>
<defs><linearGradient id="taskG" x1="0" y1="0" x2="0" y2="1"><stop offset="0" stop-color="#4a8ef0"/><stop offset="1" stop-color="#2a62c8"/></linearGradient><linearGradient id="taskGr" x1="0" y1="0" x2="0" y2="1"><stop offset="0" stop-color="#8fcf8f"/><stop offset="1" stop-color="#3e9a3e"/></linearGradient></defs>
<rect x="0" y="816" width="1440" height="1.5" fill="#f2f2f2"/>
<rect x="0" y="817.5" width="1440" height="1.5" fill="#4a4a4a"/>
<rect x="0" y="819" width="1440" height="51" fill="#dde2e2"/>
<rect x="0" y="870" width="1440" height="4" fill="url(#taskG)"/>
<rect x="0" y="870" width="93" height="4" fill="url(#taskGr)"/>
<rect x="1327" y="870" width="113" height="4" fill="#1a8ef0"/>
<circle cx="19.5" cy="843" r="12.8" fill="#e4ecee" stroke="#2aa0c8" stroke-width="2.4"/>
<text x="19.5" y="850" text-anchor="middle" font-family="Liberation Sans" font-weight="bold" font-size="18" fill="#2a90b8">P</text>
<path d="M40.5,857 H47 L43.75,861 Z" fill="#222"/>
<ellipse cx="551" cy="853" rx="11" ry="2.5" fill="#9a9a9a" opacity="0.55" filter="url(#blur2)"/>
<rect x="542" y="833.5" width="19" height="17.5" fill="#fff" stroke="#3a7bd0" stroke-width="1.8"/>
<path d="M549,833.5 V844 H561" fill="none" stroke="#3a7bd0" stroke-width="1.8"/>
<ellipse cx="599" cy="851" rx="11" ry="2.5" fill="#9a9a9a" opacity="0.55" filter="url(#blur2)"/>
<path d="M588,841.5 Q599.5,830 611,841.5 Q599.5,853 588,841.5 Z" fill="#3a7bd0"/><circle cx="599.5" cy="841.5" r="3.6" fill="#fff"/><circle cx="599.5" cy="841.5" r="2" fill="#3a7bd0"/>
<ellipse cx="649" cy="853" rx="11" ry="2.5" fill="#9a9a9a" opacity="0.55" filter="url(#blur2)"/>
<path d="M649.3,833 L658.7,838 V848 L649.3,852 L640,848 V838 Z M640,838 L649.3,843 L658.7,838 M649.3,843 V852" fill="#f4f8fc" stroke="#5a90d8" stroke-width="1.1"/>
<ellipse cx="697" cy="852" rx="11" ry="2.5" fill="#9a9a9a" opacity="0.55" filter="url(#blur2)"/>
<path d="M687,839 L698,835 L708.3,839 V847 L698,850 L687,847 Z" fill="#9cc0e8"/><path d="M687,839 L698,842.5 L708.3,839 L698,835 Z" fill="#b8d4f2"/>
<ellipse cx="747" cy="853" rx="10" ry="2.5" fill="#9a9a9a" opacity="0.55" filter="url(#blur2)"/>
<circle cx="744.5" cy="840.5" r="6" fill="#e8f0fa" stroke="#3a7bd0" stroke-width="2"/><path d="M749,845 L756.5,852" stroke="#3a7bd0" stroke-width="2.6"/>
<ellipse cx="796" cy="852" rx="10" ry="2.5" fill="#9a9a9a" opacity="0.55" filter="url(#blur2)"/>
<rect x="790.5" y="833.5" width="10" height="5" fill="#fff" stroke="#3a7bd0" stroke-width="1.2"/><rect x="787.5" y="838" width="16.2" height="8" rx="1.5" fill="#3a7bd0"/><rect x="790.5" y="843" width="10" height="6.5" fill="#fff" stroke="#3a7bd0" stroke-width="1.2"/>
<rect x="821.5" y="834.5" width="92" height="19" fill="#fff" stroke="#8a8a8a" stroke-width="1"/>
<rect x="898.5" y="835" width="14.5" height="18" fill="#cfcfcf"/>
<path d="M902.5,842.5 H909 L905.75,846 Z" fill="#444"/>
<text x="823.5" y="848.5" font-family="Liberation Sans" font-size="13" fill="#000">全部</text>
<circle cx="1407.4" cy="842" r="12.5" fill="#e2eaec" stroke="#2aa0c8" stroke-width="2.2"/>
<text x="1407.4" y="849" text-anchor="middle" font-family="Liberation Sans" font-weight="bold" font-size="17" fill="#2a90b8">M</text>
<rect x="1278" y="846.5" width="161" height="23" fill="#fafcff" stroke="#b8cce0" stroke-width="1"/>
<g transform="rotate(-12 1269 856.5)"><rect x="1256" y="843.5" width="26" height="26" rx="4" fill="#f0541e"/><text x="1269" y="864" text-anchor="middle" font-family="Liberation Sans" font-weight="bold" font-style="italic" font-size="24" fill="#fff">S</text></g>
<text x="1296" y="864" text-anchor="middle" font-family="Liberation Sans" font-weight="bold" font-size="15" fill="#2b78d0">中</text>
<path d="M1321,850 Q1327,856 1323,862 Q1318,867 1311,864 Q1318,863 1321,857 Q1323,853 1321,850 Z" fill="#2b78d0"/>
<circle cx="1335.5" cy="855" r="1.8" fill="none" stroke="#2b78d0" stroke-width="1.2"/><path d="M1342,857 Q1344,860 1340,864" stroke="#2b78d0" stroke-width="2" fill="none"/>
<rect x="1354.5" y="852" width="15.5" height="11.5" rx="1.5" fill="none" stroke="#2b78d0" stroke-width="1.6"/><path d="M1357,855.5 H1368 M1357,858 H1368 M1359,861 H1366" stroke="#2b78d0" stroke-width="1.2" stroke-dasharray="1.5,0.8"/>
<circle cx="1384" cy="853" r="3" fill="#b8c4d0"/><path d="M1378,866 Q1378,858 1384,858 Q1390,858 1390,866 Z" fill="#b8c4d0"/>
<path d="M1399,854 L1403.5,851 H1408.5 L1413,854 L1411,857.5 L1410,857 V866 H1402 V857 L1401,857.5 Z" fill="#2b78d0"/>
<path d="M1422,866 L1430,857 Q1428,851 1433,850 L1435,852 L1432,854.5 L1434,856.5 L1436.5,854 Q1438,859 1432,859.5 L1424,867.5 Z" fill="#2b78d0"/>
<defs>
<linearGradient id="tbMid" x1="0" y1="0" x2="0" y2="1"><stop offset="0" stop-color="#434247"/><stop offset="1" stop-color="#29292b"/></linearGradient>
<linearGradient id="tbSide" x1="0" y1="0" x2="0" y2="1"><stop offset="0" stop-color="#57565c"/><stop offset="1" stop-color="#36353a"/></linearGradient>
<linearGradient id="logoG" x1="0" y1="0" x2="1" y2="0"><stop offset="0" stop-color="#3a7ff0"/><stop offset="0.5" stop-color="#1ea8f8"/><stop offset="1" stop-color="#08d0fa"/></linearGradient>
<radialGradient id="btnG" cx="0.5" cy="0.35" r="0.6"><stop offset="0" stop-color="#6cc020"/><stop offset="1" stop-color="#3f8a10"/></radialGradient>
<radialGradient id="btnB" cx="0.5" cy="0.35" r="0.6"><stop offset="0" stop-color="#5aa0ff"/><stop offset="1" stop-color="#2f6fe0"/></radialGradient>
<radialGradient id="btnR" cx="0.5" cy="0.35" r="0.6"><stop offset="0" stop-color="#f05048"/><stop offset="1" stop-color="#c02a22"/></radialGradient>
</defs>
<rect x="0" y="0" width="1440" height="51" fill="url(#tbMid)"/>
<rect x="0" y="45" width="1440" height="6" fill="#2c2c2e"/>
<path d="M0,0 H217 C245,8 262,38 300,44.5 H0 Z" fill="url(#tbSide)"/>
<path d="M217,0 C245,8 262,38 300,44.5 H1189" fill="none" stroke="#59595d" stroke-width="1"/>
<path d="M1224,0 L1196,38 Q1191,44.5 1183,44.5 H1440 V0 Z" fill="url(#tbSide)"/>
<path d="M1224,0 L1196,38 Q1191,44.5 1183,44.5" fill="none" stroke="#59595d" stroke-width="1"/>
<rect x="0" y="44.5" width="1440" height="6.5" fill="#313133"/>
<line x1="300" y1="44.5" x2="1183" y2="44.5" stroke="#505054" stroke-width="1"/>
<line x1="1082" y1="0.5" x2="1360" y2="0.5" stroke="#6e747a" stroke-width="1"/>
<line x1="1294.5" y1="0" x2="1294.5" y2="46" stroke="#1c1c1e" stroke-width="1"/>
<line x1="1295.5" y1="0" x2="1295.5" y2="46" stroke="#5a5a5e" stroke-width="1"/>
<path d="M3,21 L45,11 L31,42 L21,31 L17,36 L15,27 Z" fill="#eef6fc"/>
<path d="M15,27 L45,11 L21,31 L17,36 Z" fill="#9fb2c8"/>
<path d="M21,31 L45,11 L31,42 Z" fill="#e8f2fa"/>
<text x="52" y="36.5" font-family="Liberation Sans" font-weight="bold" font-style="italic" font-size="29" textLength="120" lengthAdjust="spacingAndGlyphs" letter-spacing="2" fill="url(#logoG)" stroke="url(#logoG)" stroke-width="0.9" transform="skewX(-8) translate(5,0)">3DOne</text>
<path d="M309.5,8.7 H327 L333,14.5 V33.3 H309.5 Z" fill="#b2b2b2"/>
<rect x="315" y="10.5" width="12" height="6" fill="#3a3a3c"/><rect x="322.5" y="10.5" width="3" height="4.5" fill="#b2b2b2"/>
<rect x="313" y="22" width="17" height="9.5" fill="#343436"/>
<rect x="316" y="23.5" width="11" height="1.3" fill="#8a8a8a"/><rect x="316" y="26" width="11" height="1.3" fill="#8a8a8a"/><rect x="316" y="28.5" width="11" height="1.3" fill="#8a8a8a"/>
<path d="M352,17 L362,8.5 V13.5 C372,13.5 377,20 374,28 C373,30 371,32 369,33 C371,27 369,21 362,21 V25.5 Z" fill="#a8a8a8"/>
<path d="M416,17 L406,8.5 V13.5 C396,13.5 391,20 394,28 C395,30 397,32 399,33 C397,27 399,21 406,21 V25.5 Z" fill="#c8c6b8"/>
<text x="1268" y="32" text-anchor="middle" font-family="Liberation Sans" font-weight="bold" font-size="32" fill="#d8d8d8">?</text>
<circle cx="1331" cy="22" r="15" fill="#1a1a1a"/>
<path d="M1317,24 A14,14 0 0 0 1345,24" fill="none" stroke="#8a8a8a" stroke-width="1"/>
<circle cx="1331" cy="21" r="11.5" fill="url(#btnG)"/>
<circle cx="1372" cy="22" r="15" fill="#1a1a1a"/>
<path d="M1358,24 A14,14 0 0 0 1386,24" fill="none" stroke="#8a8a8a" stroke-width="1"/>
<circle cx="1372" cy="21" r="11.5" fill="url(#btnB)"/>
<circle cx="1414" cy="22" r="15" fill="#1a1a1a"/>
<path d="M1400,24 A14,14 0 0 0 1428,24" fill="none" stroke="#8a8a8a" stroke-width="1"/>
<circle cx="1414" cy="21" r="11.5" fill="url(#btnR)"/>
<rect x="1324" y="20" width="14" height="2.6" fill="#fff"/>
<rect x="1367.5" y="19.5" width="8" height="8" rx="1.5" fill="none" stroke="#fff" stroke-width="1.5"/>
<path d="M1369.5,16.5 H1376.5 Q1378.5,16.5 1378.5,18.5 V25" fill="none" stroke="#fff" stroke-width="1.5"/>
<path d="M1408,15 L1420,27 M1420,15 L1408,27" stroke="#fff" stroke-width="2.2"/>
<text x="720" y="27" text-anchor="middle" font-family="Liberation Sans" font-size="15.5" fill="#e8e8e8">家庭版 - [阿帕奇.Z1]</text>
<rect x="1427.5" y="51" width="12.5" height="766" fill="#e9e9e9"/>
<line x1="1427.5" y1="51" x2="1427.5" y2="817" stroke="#9a9a9a" stroke-width="1"/>
<rect x="1428" y="359" width="12" height="150" fill="#0898d0"/>
<path d="M1438,428 V439 L1431,433.5 Z" fill="#fff"/>
<text x="1338" y="811" font-family="Liberation Mono" font-size="11" fill="#222" textLength="59" lengthAdjust="spacingAndGlyphs">97.104 mm</text>
</svg>
</body></html>
